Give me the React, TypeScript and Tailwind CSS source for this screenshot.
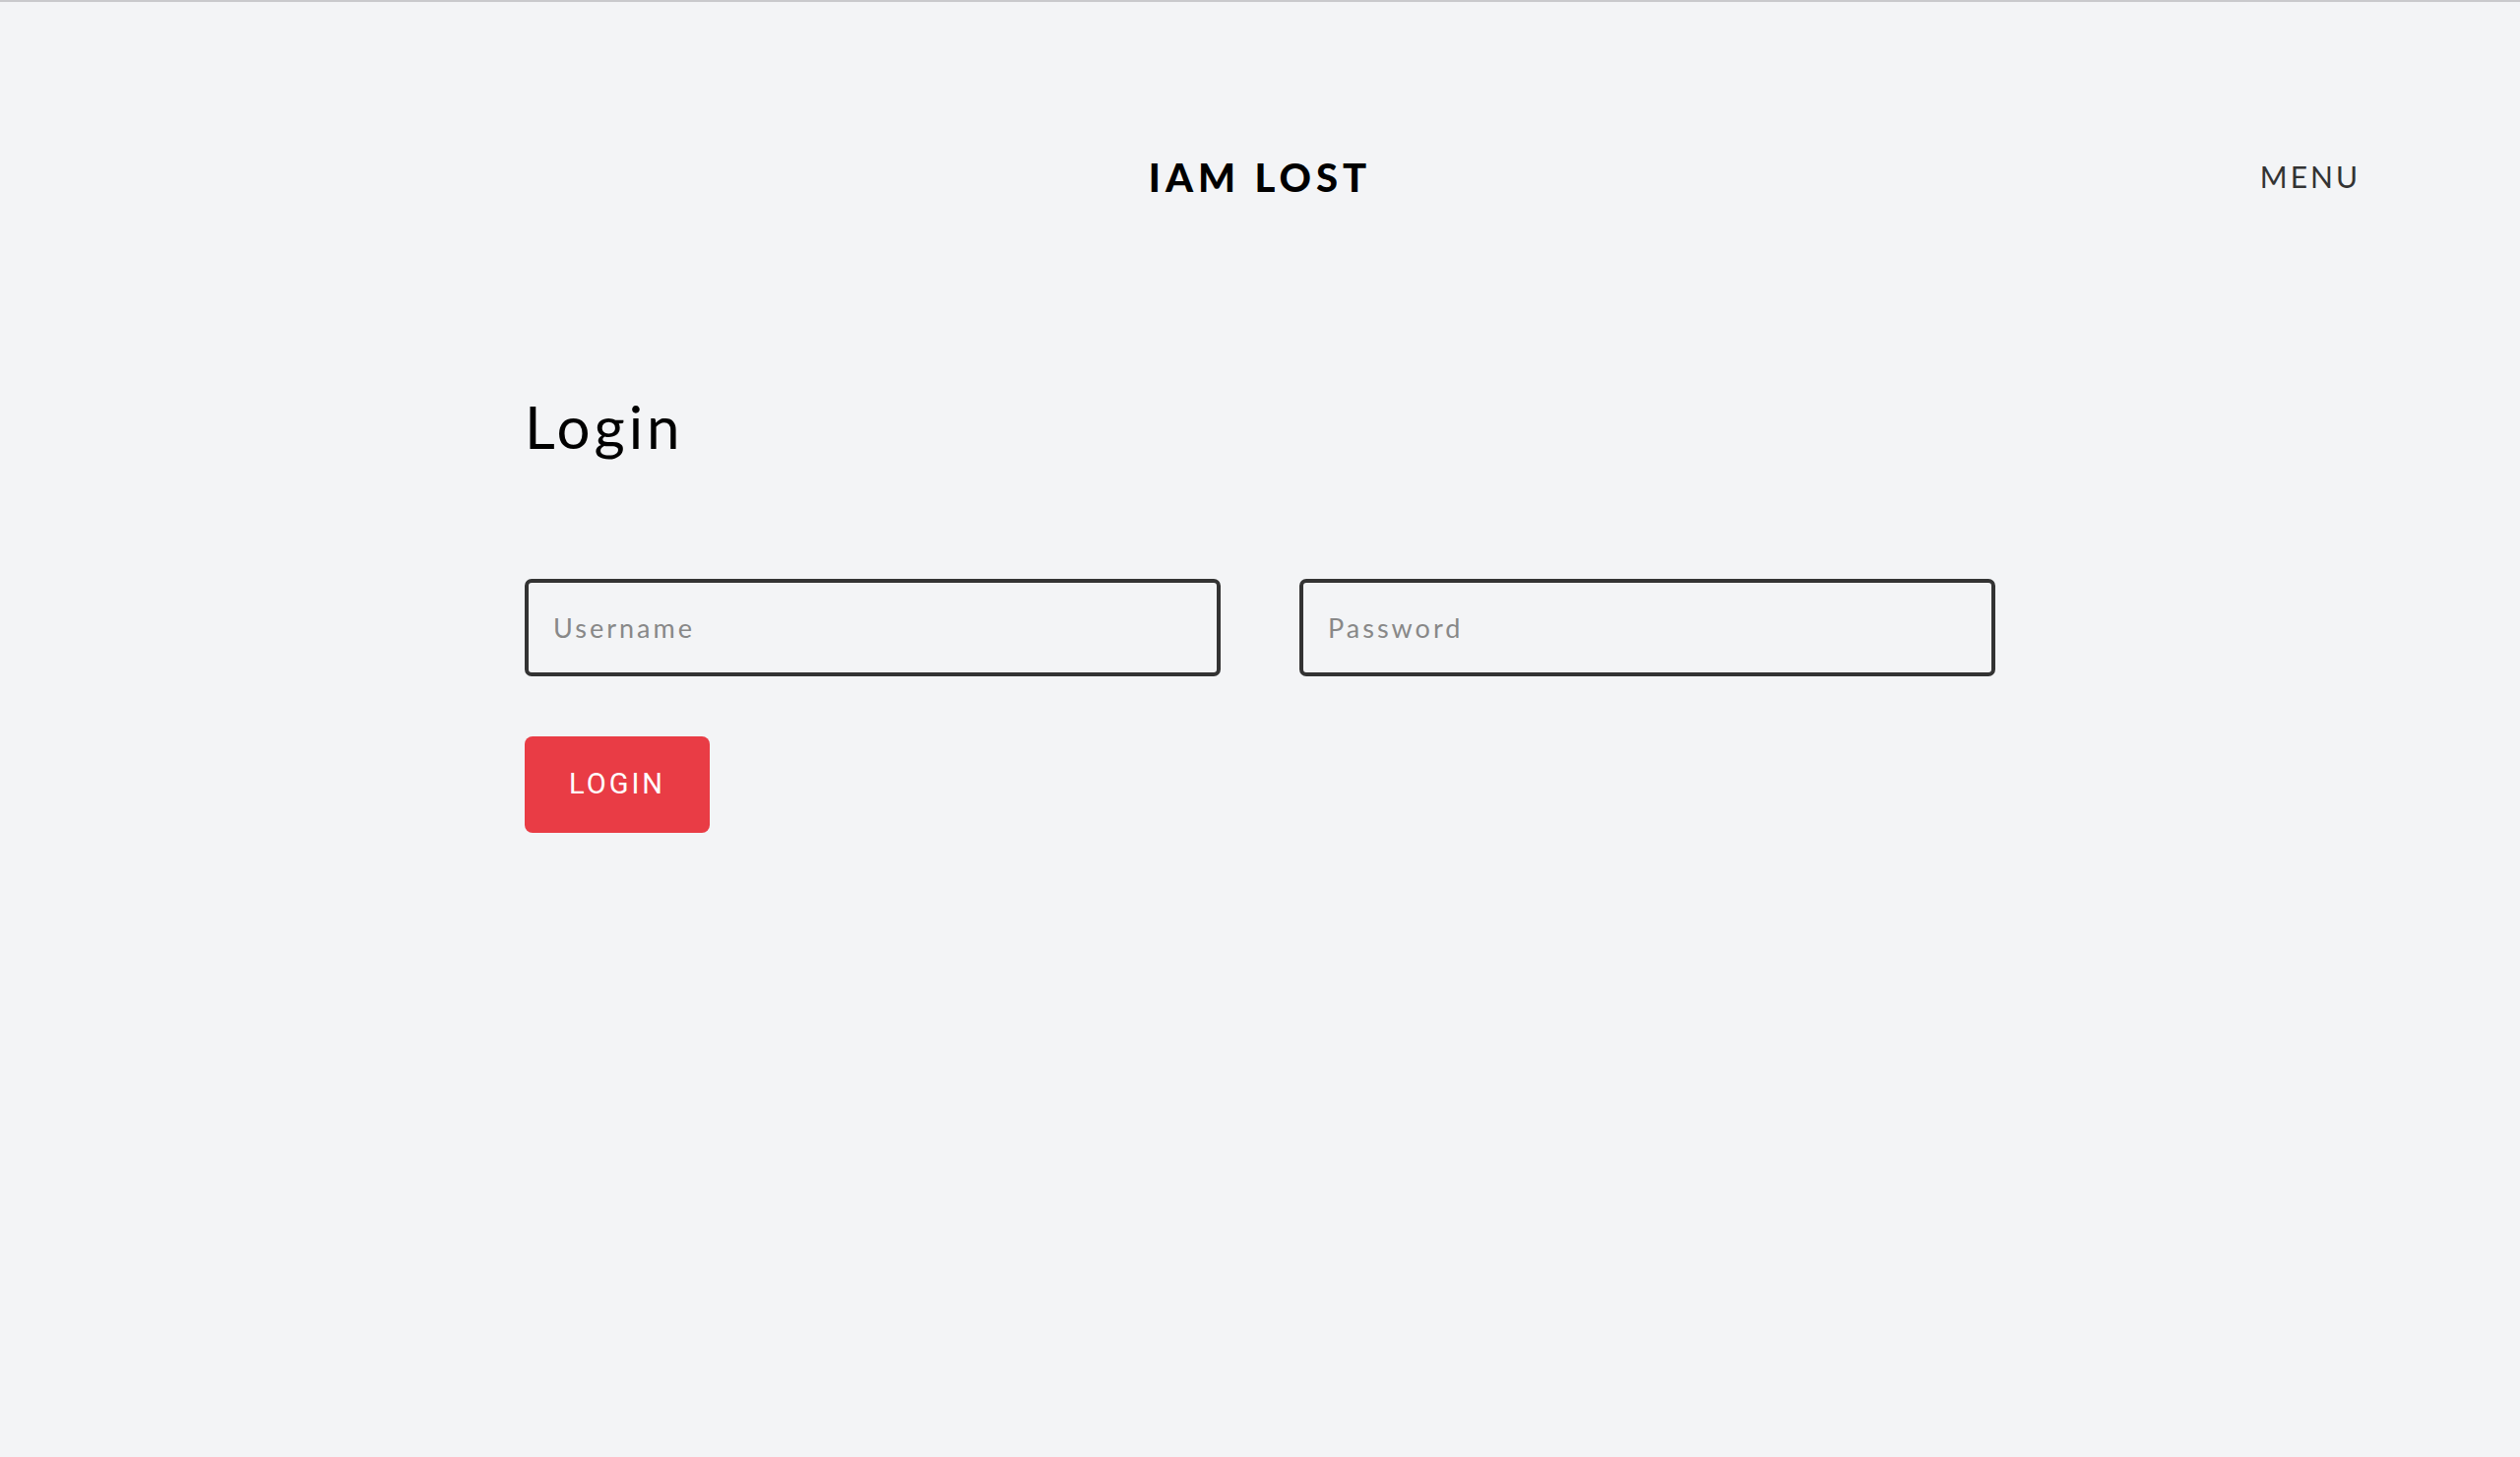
import { useState } from "react";

const Header = () => {
	return (
		<header className="grid grid-cols-3 items-center px-[162px] pt-[158px]">
			<div />
			<h1 className="text-center text-[40px] leading-none font-black tracking-[5px] text-black">
				IAM LOST
			</h1>
			<div className="text-right">
				<button className="text-[30px] leading-none tracking-[3px] text-[#333]">MENU</button>
			</div>
		</header>
	);
};

const App = () => {
	const [username, setUsername] = useState("");
	const [password, setPassword] = useState("");

	return (
		<div
			className="min-h-screen w-full bg-[#f3f4f6] border-t-2 border-[#c9c9cc]"
			style={{ fontFamily: "Lato, 'Open Sans', sans-serif" }}
		>
			<Header />

			<main className="w-[1494px] mx-auto mt-[203px]">
				<h2 className="text-[60px] leading-none tracking-[4px] text-black">Login</h2>

				<form
					onSubmit={(e) => e.preventDefault()}
					className="flex flex-col items-start mt-[125px]"
				>
					<div className="grid grid-cols-2 gap-[80px] w-full">
						<input
							placeholder="Username"
							type="text"
							value={username}
							onChange={(e) => setUsername(e.target.value)}
							className="h-[99px] rounded-[7px] border-4 border-[#333] bg-transparent px-[25px] text-[27px] tracking-[3px] text-[#333] placeholder:text-[#888] outline-none"
						/>
						<input
							placeholder="Password"
							type="password"
							value={password}
							onChange={(e) => setPassword(e.target.value)}
							className="h-[99px] rounded-[7px] border-4 border-[#333] bg-transparent px-[25px] text-[27px] tracking-[3px] text-[#333] placeholder:text-[#888] outline-none"
						/>
					</div>

					<button
						type="submit"
						className="mt-[61px] w-[188px] h-[98px] rounded-[8px] bg-[#e93c45] text-white text-[29px] tracking-[3px] font-normal"
						style={{ fontFamily: "Roboto, 'Liberation Sans', sans-serif" }}
					>
						LOGIN
					</button>
				</form>
			</main>
		</div>
	);
};

export default App;
